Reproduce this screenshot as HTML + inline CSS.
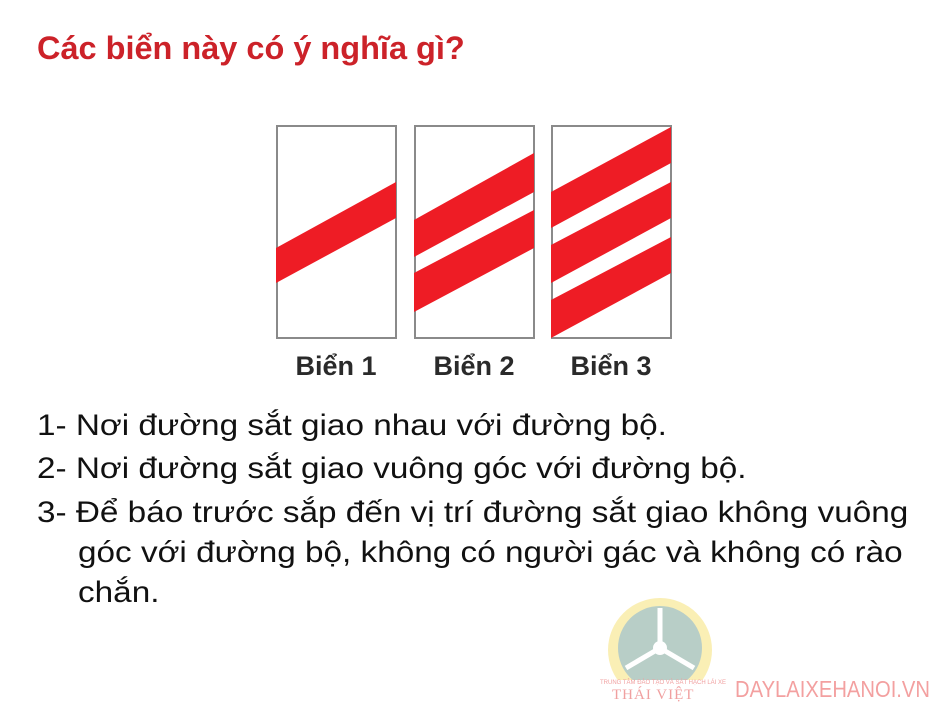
<!DOCTYPE html>
<html><head><meta charset="utf-8"><style>
body{margin:0;width:945px;height:709px;background:#fff;position:relative;overflow:hidden;font-family:"Liberation Sans",Arial,sans-serif;}
.t{position:absolute;white-space:nowrap;line-height:1;transform-origin:0 0;}
.title{left:37px;top:32px;font-size:32px;font-weight:bold;color:#cc2229;transform:scaleX(1.015);}
.b{font-size:30px;color:#111;left:37px;transform:scaleX(1.11);}
.lbl{position:absolute;top:353px;font-size:27px;font-weight:bold;color:#2a2a2a;width:120px;text-align:center;line-height:1;}
</style></head><body>
<div class="t title">Các biển này có ý nghĩa gì?</div>
<svg style="position:absolute;left:0;top:0" width="945" height="709">
 <g opacity="0.55">
  <circle cx="660" cy="650" r="52" fill="#f7e27a"/>
  <circle cx="660" cy="648" r="42" fill="#7fa79a"/>
  <circle cx="660" cy="648" r="7" fill="#fff"/>
  <path d="M660 648 L660 608 M660 648 L626 668 M660 648 L694 668" stroke="#fff" stroke-width="5"/>
  <rect x="596" y="680" width="128" height="25" fill="#fff"/>
 </g>
 <text x="600" y="684" font-size="6" fill="#f0a0a0" font-family="Liberation Sans">TRUNG TÂM ĐÀO TẠO VÀ SÁT HẠCH LÁI XE</text>
 <text x="612" y="699" font-size="15" fill="#f0a0a0" font-family="Liberation Serif" letter-spacing="1">THÁI VIỆT</text>
 <text x="735" y="697" font-size="23" fill="#f3a0a0" font-family="Liberation Sans" textLength="195" lengthAdjust="spacingAndGlyphs">DAYLAIXEHANOI.VN</text>
 <g transform="translate(276,125)">
  <rect x="1" y="1" width="119" height="212" fill="#fff" stroke="#8a8a8a" stroke-width="2"/>
  <polygon points="0,123 120,57 120,93 0,158" fill="#ee1c25"/>
 </g>
 <g transform="translate(414,125)">
  <rect x="1" y="1" width="119" height="212" fill="#fff" stroke="#8a8a8a" stroke-width="2"/>
  <polygon points="0,95 120,28 120,67 0,132" fill="#ee1c25"/>
  <polygon points="0,148 120,85 120,123 0,187" fill="#ee1c25"/>
 </g>
 <g transform="translate(551,125)">
  <rect x="1" y="1" width="119" height="212" fill="#fff" stroke="#8a8a8a" stroke-width="2"/>
  <polygon points="0,67 120,2 120,38 0,103" fill="#ee1c25"/>
  <polygon points="0,120 120,57 120,93 0,158" fill="#ee1c25"/>
  <polygon points="0,175 120,112 120,148 0,213" fill="#ee1c25"/>
 </g>
</svg>
<div class="lbl" style="left:276px">Biển 1</div>
<div class="lbl" style="left:414px">Biển 2</div>
<div class="lbl" style="left:551px">Biển 3</div>
<div class="t b" style="top:411px">1- Nơi đường sắt giao nhau với đường bộ.</div>
<div class="t b" style="top:454px">2- Nơi đường sắt giao vuông góc với đường bộ.</div>
<div class="t b" style="top:498px">3- Để báo trước sắp đến vị trí đường sắt giao không vuông</div>
<div class="t b" style="top:538px;left:78px">góc với đường bộ, không có người gác và không có rào</div>
<div class="t b" style="top:578px;left:78px">chắn.</div>
</body></html>
